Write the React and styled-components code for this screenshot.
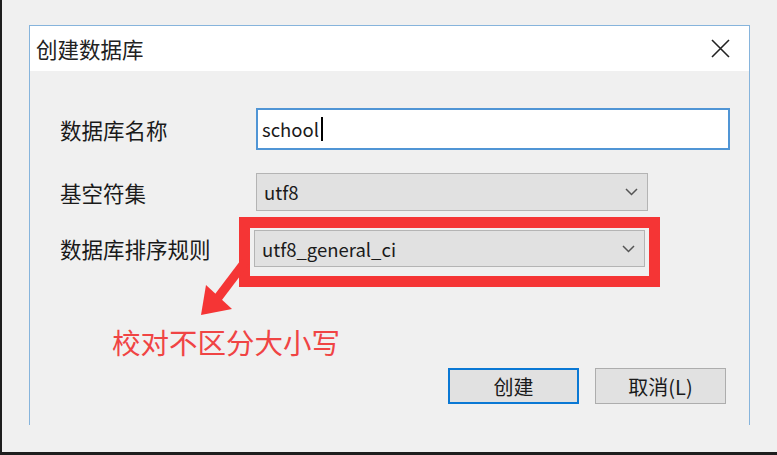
import React from 'react';
import styled, { createGlobalStyle } from 'styled-components';

const GlobalStyle = createGlobalStyle`
  html, body {
    margin: 0;
    padding: 0;
    background: #f0f0f0;
  }
  * {
    box-sizing: border-box;
  }
`;

const Screen = styled.div`
  width: 777px;
  height: 455px;
  background: #f0f0f0;
  border-left: 2px solid #1e1e1e;
  border-bottom: 3px solid #1e1e1e;
  padding: 25px 0 0 27px;
  font-family: "Noto Sans CJK SC", "Noto Sans", sans-serif;
  overflow: hidden;
`;

const Dialog = styled.div`
  position: relative;
  width: 721px;
  height: 400px;
  border: 1px solid #86b4dc;
  border-bottom: none;
  background: #f0f0f0;
`;

const TitleBar = styled.div`
  height: 45px;
  background: #fff;
  display: flex;
  align-items: center;
  justify-content: space-between;
  padding: 0 19px 0 6px;
`;

const Title = styled.span`
  font-size: 21.5px;
  color: #222;
`;

const CloseButton = styled.button`
  border: none;
  background: none;
  padding: 0;
  width: 20px;
  height: 20px;
  display: flex;
  align-items: center;
  justify-content: center;
`;

const Body = styled.div`
  padding: 37px 19px 0 30px;
`;

const Field = styled.div`
  display: grid;
  grid-template-columns: 196px 1fr;
  align-items: center;
  margin-top: ${(p) => p.$gap || 0}px;
`;

const Label = styled.label`
  font-size: 21.5px;
  color: #1a1a1a;
`;

const TextInput = styled.div`
  width: 474px;
  height: 42px;
  background: #fff;
  border: 2px solid #5095d5;
  display: flex;
  align-items: center;
  padding-left: 4px;
  font-size: 18.5px;
  color: #1a1a1a;
`;

const Caret = styled.span`
  display: inline-block;
  width: 2px;
  height: 24px;
  margin-left: 2px;
  background: #000;
`;

const Select = styled.div`
  position: relative;
  width: ${(p) => p.$width}px;
  height: ${(p) => p.$height}px;
  margin-left: ${(p) => p.$shift || 0}px;
  background: #e1e1e1;
  border: 1px solid #b4b4b4;
  display: flex;
  align-items: center;
  justify-content: space-between;
  padding: 0 9px 0 7px;
  font-size: 18.5px;
  color: #1a1a1a;

  ${(p) =>
    p.$marked &&
    `
    &::after {
      content: '';
      position: absolute;
      top: -14px;
      right: -16px;
      bottom: -21px;
      left: -16px;
      border: 11px solid #f53535;
      pointer-events: none;
    }
  `}
`;

const Note = styled.div`
  margin: 58px 0 0 52px;
  font-size: 28.5px;
  line-height: 34px;
  color: #f04444;
`;

const ButtonRow = styled.div`
  display: flex;
  justify-content: flex-end;
  gap: 16px;
  margin-top: 9px;
  padding-right: 4px;
`;

const Button = styled.button`
  width: 131px;
  height: 36px;
  background: #e1e1e1;
  border: ${(p) => (p.$primary ? '2px solid #0a78d4' : '1px solid #adadad')};
  font-family: inherit;
  font-size: 20px;
  color: #1a1a1a;
  padding: 0;
`;

const Arrow = styled.svg`
  position: absolute;
  left: 165px;
  top: 236px;
  overflow: visible;
  pointer-events: none;
`;

const Chevron = () => (
  <svg width="13" height="8" viewBox="0 0 13 8">
    <polyline points="1,1 6.5,6.5 12,1" fill="none" stroke="#555" strokeWidth="1.5" />
  </svg>
);

const CloseIcon = () => (
  <svg width="19" height="19" viewBox="0 0 19 19">
    <path d="M1 1 L18 18 M18 1 L1 18" stroke="#222" strokeWidth="1.6" fill="none" />
  </svg>
);

export default function App() {
  return (
    <>
      <GlobalStyle />
      <Screen>
        <Dialog>
          <TitleBar>
            <Title>创建数据库</Title>
            <CloseButton>
              <CloseIcon />
            </CloseButton>
          </TitleBar>
          <Body>
            <Field>
              <Label>数据库名称</Label>
              <TextInput>
                school
                <Caret />
              </TextInput>
            </Field>
            <Field $gap={23}>
              <Label>基空符集</Label>
              <Select $width={392} $height={38}>
                utf8
                <Chevron />
              </Select>
            </Field>
            <Field $gap={19}>
              <Label>数据库排序规则</Label>
              <Select $width={391} $height={37} $shift={-2} $marked>
                utf8_general_ci
                <Chevron />
              </Select>
            </Field>
            <Note>校对不区分大小写</Note>
            <ButtonRow>
              <Button $primary>创建</Button>
              <Button>取消(L)</Button>
            </ButtonRow>
          </Body>
          <Arrow width="60" height="60" viewBox="0 0 60 60">
            <line x1="50" y1="0" x2="22" y2="37" stroke="#f53535" strokeWidth="9" />
            <polygon points="6,53 11,23 37,47" fill="#f53535" />
          </Arrow>
        </Dialog>
      </Screen>
    </>
  );
}
